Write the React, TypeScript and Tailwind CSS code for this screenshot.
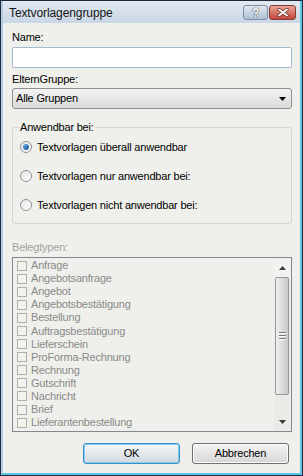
const items = [
  'Anfrage',
  'Angebotsanfrage',
  'Angebot',
  'Angebotsbestätigung',
  'Bestellung',
  'Auftragsbestätigung',
  'Lieferschein',
  'ProForma-Rechnung',
  'Rechnung',
  'Gutschrift',
  'Nachricht',
  'Brief',
  'Lieferantenbestellung',
]

const radios = [
  { label: 'Textvorlagen überall anwendbar', checked: true },
  { label: 'Textvorlagen nur anwendbar bei:', checked: false },
  { label: 'Textvorlagen nicht anwendbar bei:', checked: false },
]

const Radio = ({ checked }: { checked: boolean }) => (
  <div className="w-[12px] h-[12px] rounded-full border border-[#8f9196] bg-gradient-to-br from-[#e4e4e4] to-[#ffffff] flex items-center justify-center shrink-0">
    {checked && (
      <div className="w-[6px] h-[6px] rounded-full bg-gradient-to-br from-[#6db3e8] to-[#0d4f96]" />
    )}
  </div>
)

export default function App() {
  return (
    <div
      className="w-[303px] h-[476px] border border-[#1e2a36] bg-[#a8c8e6] text-[11px] tracking-[-0.2px] text-black"
      style={{ fontFamily: '"Liberation Sans", Arial, sans-serif' }}
    >
      <div className="h-full flex flex-col border-l-2 border-l-[#b4cde6] border-r-2 border-r-[#62c6e8] border-b-2 border-b-[#58c4e6]">
        {/* Title bar */}
        <div className="h-[22px] shrink-0 flex items-center bg-gradient-to-b from-[#e2e9f1] to-[#c9d6e5] pl-[6px] pr-[4px]">
          <span className="text-[12px] tracking-[-0.1px] text-[#141414] flex-1 mt-[1px]">Textvorlagengruppe</span>
          <div className="flex gap-[1px] mt-[1px]">
            <div className="w-[25px] h-[15px] rounded-[3px] border border-[#7c8ea4] bg-gradient-to-b from-[#dfe7f1] to-[#aebfd4] flex items-center justify-center">
              <span className="text-[12px] font-bold text-white leading-none" style={{ textShadow: '0 0 1px #333, 0 0 1px #333' }}>?</span>
            </div>
            <div className="w-[27px] h-[15px] rounded-[3px] border border-[#8a3a32] bg-gradient-to-b from-[#e8a394] to-[#c2473a] flex items-center justify-center">
              <svg width="12" height="9" viewBox="0 0 12 9">
                <path d="M2 1.5 L10 7.5 M10 1.5 L2 7.5" stroke="#5a1a14" strokeWidth="3.2" strokeLinecap="round" />
                <path d="M2 1.5 L10 7.5 M10 1.5 L2 7.5" stroke="#ffffff" strokeWidth="2" strokeLinecap="round" />
              </svg>
            </div>
          </div>
        </div>

        {/* Body */}
        <div className="flex-1 flex flex-col bg-[#eff0eb] pl-[9px] pr-[8px] pt-[8px]">
          <div className="leading-[13px]">Name:</div>
          <div className="mt-[3px] h-[21px] rounded-[2px] border border-[#a6bad2] bg-white" />

          <div className="mt-[5px] leading-[13px]">ElternGruppe:</div>
          <div className="mt-[2px] h-[21px] rounded-[3px] border border-[#8e8f8f] bg-gradient-to-b from-[#f3f3f3] to-[#dadada] flex items-center pl-[3px] pr-[5px]">
            <span className="flex-1">Alle Gruppen</span>
            <svg width="7" height="4" viewBox="0 0 7 4">
              <path d="M0 0 H7 L3.5 4 Z" fill="#000" />
            </svg>
          </div>

          {/* Group box */}
          <div className="relative mt-[18px] h-[97px] rounded-[3px] border border-[#d5d5cb] pl-[7px] pt-[11px]">
            <span className="absolute left-[6px] -top-[7px] leading-[13px] bg-[#eff0eb] px-[1px]">Anwendbar bei:</span>
            <div className="flex flex-col gap-[13px]">
              {radios.map((r) => (
                <div key={r.label} className="flex items-center gap-[5px] h-[16px]">
                  <Radio checked={r.checked} />
                  <span>{r.label}</span>
                </div>
              ))}
            </div>
          </div>

          <div className="mt-[17px] leading-[13px] text-[#a3a3a3]">Belegtypen:</div>

          {/* List box */}
          <div className="mt-[3px] h-[175px] border border-[#828790] flex py-[1px] pr-[1px] overflow-hidden">
            <div className="flex-1 flex flex-col pl-[4px] overflow-hidden">
              {items.map((it) => (
                <div key={it} className="h-[13.1px] shrink-0 flex items-center gap-[4px] text-[#8a8a8a]">
                  <div className="w-[10px] h-[10px] border border-[#b0b0a8] bg-[#f2f2ee] shrink-0" />
                  <span className="leading-[13px]">{it}</span>
                </div>
              ))}
              {/* partially visible next row */}
              <div className="h-[13.1px] shrink-0 flex items-center">
                <div className="w-[10px] h-[10px] border border-[#b0b0a8] bg-[#f2f2ee] shrink-0" />
              </div>
            </div>
            {/* Scrollbar */}
            <div className="w-[16px] flex flex-col bg-[#eaeae6]">
              <div className="h-[18px] flex items-center justify-center bg-[#f2f2f0]">
                <svg width="7" height="4" viewBox="0 0 7 4">
                  <path d="M0 4 H7 L3.5 0 Z" fill="#3a3a3a" />
                </svg>
              </div>
              <div className="h-[118px] mx-[1px] rounded-[2px] border border-[#979797] bg-gradient-to-r from-[#f0f0f0] via-[#dcdcdc] to-[#c8c8cc] flex items-center justify-center">
                <div className="flex flex-col gap-[1px]">
                  <div className="w-[7px] h-[2px] bg-[#7a7a7a] border-b border-white" />
                  <div className="w-[7px] h-[2px] bg-[#7a7a7a] border-b border-white" />
                  <div className="w-[7px] h-[2px] bg-[#7a7a7a] border-b border-white" />
                </div>
              </div>
              <div className="flex-1" />
              <div className="h-[17px] flex items-center justify-center">
                <svg width="7" height="4" viewBox="0 0 7 4">
                  <path d="M0 0 H7 L3.5 4 Z" fill="#3a3a3a" />
                </svg>
              </div>
            </div>
          </div>

          {/* Buttons */}
          <div className="mt-[11px] flex justify-end gap-[12px] mr-[3px]">
            <button className="w-[97px] h-[21px] rounded-[3px] border border-[#3c8ec8] bg-gradient-to-b from-[#f4f6f8] to-[#d3d9df] shadow-[inset_0_0_0_1px_#7fd0f0] leading-none">
              OK
            </button>
            <button className="w-[97px] h-[21px] rounded-[3px] border border-[#707070] bg-gradient-to-b from-[#f4f4f4] to-[#d6d6d6] shadow-[inset_0_0_0_1px_#fafafa] leading-none">
              Abbrechen
            </button>
          </div>
        </div>
      </div>
    </div>
  )
}
